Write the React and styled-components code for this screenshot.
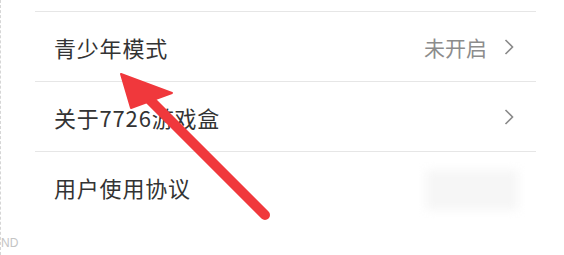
import React from 'react';
import styled, { createGlobalStyle } from 'styled-components';

const GlobalStyle = createGlobalStyle`
  body {
    margin: 0;
    background: #ffffff;
    font-family: "Noto Sans CJK SC", "Noto Sans", sans-serif;
  }
`

const Page = styled.div`
  position: relative;
  width: 564px;
  height: 255px;
  display: flex;
  overflow: hidden;
  background: #ffffff;
`

const Rail = styled.div`
  width: 35px;
  border-left: 1px dashed #d6d6d6;
  display: flex;
  flex-direction: column;
  justify-content: flex-end;
  padding-bottom: 5px;
  box-sizing: border-box;
`

const RailLabel = styled.span`
  font-family: "Liberation Sans", sans-serif;
  font-size: 12px;
  color: #c4c4c4;
`

const List = styled.div`
  flex: 1;
  margin-right: 28px;
  padding-top: 11px;
`

const Row = styled.div`
  display: flex;
  align-items: center;
  justify-content: space-between;
  height: 69px;
  padding: 0 22px 0 19px;
  border-top: 1px solid #e6e6e6;
`

const Label = styled.span`
  font-size: 22px;
  color: #333333;
  letter-spacing: 0.8px;
`

const Side = styled.div`
  display: flex;
  align-items: center;
  gap: 17px;
`

const Value = styled.span`
  font-size: 21px;
  color: #8c8c8c;
`

const Blur = styled.div`
  width: 92px;
  height: 40px;
  margin-right: -4px;
  margin-top: 6px;
  background: #f6f6f6;
  filter: blur(5px);
`

const ArrowLayer = styled.svg`
  position: absolute;
  left: 0;
  top: 0;
  pointer-events: none;
`

const Chevron = () => (
  <svg width="10" height="16" viewBox="0 0 10 16">
    <polyline points="1.5,1 8.5,8 1.5,15" fill="none" stroke="#8a8a8a" strokeWidth="1.6" />
  </svg>
)

const rows = [
  { label: '青少年模式', value: '未开启', chevron: true },
  { label: '关于7726游戏盒', chevron: true },
  { label: '用户使用协议', blurred: true },
]

export default function App() {
  return (
    <Page>
      <GlobalStyle />
      <Rail>
        <RailLabel>ND</RailLabel>
      </Rail>
      <List>
        {rows.map((r) => (
          <Row key={r.label}>
            <Label>{r.label}</Label>
            <Side>
              {r.value && <Value>{r.value}</Value>}
              {r.chevron && <Chevron />}
              {r.blurred && <Blur />}
            </Side>
          </Row>
        ))}
      </List>
      <ArrowLayer width="564" height="255" viewBox="0 0 564 255">
        <line x1="150" y1="100" x2="265" y2="215" stroke="#f0383c" strokeWidth="10" strokeLinecap="round" />
        <polygon points="121,74 172,93 131,108" fill="#f0383c" stroke="#f0383c" strokeWidth="2" strokeLinejoin="round" />
      </ArrowLayer>
    </Page>
  );
}
